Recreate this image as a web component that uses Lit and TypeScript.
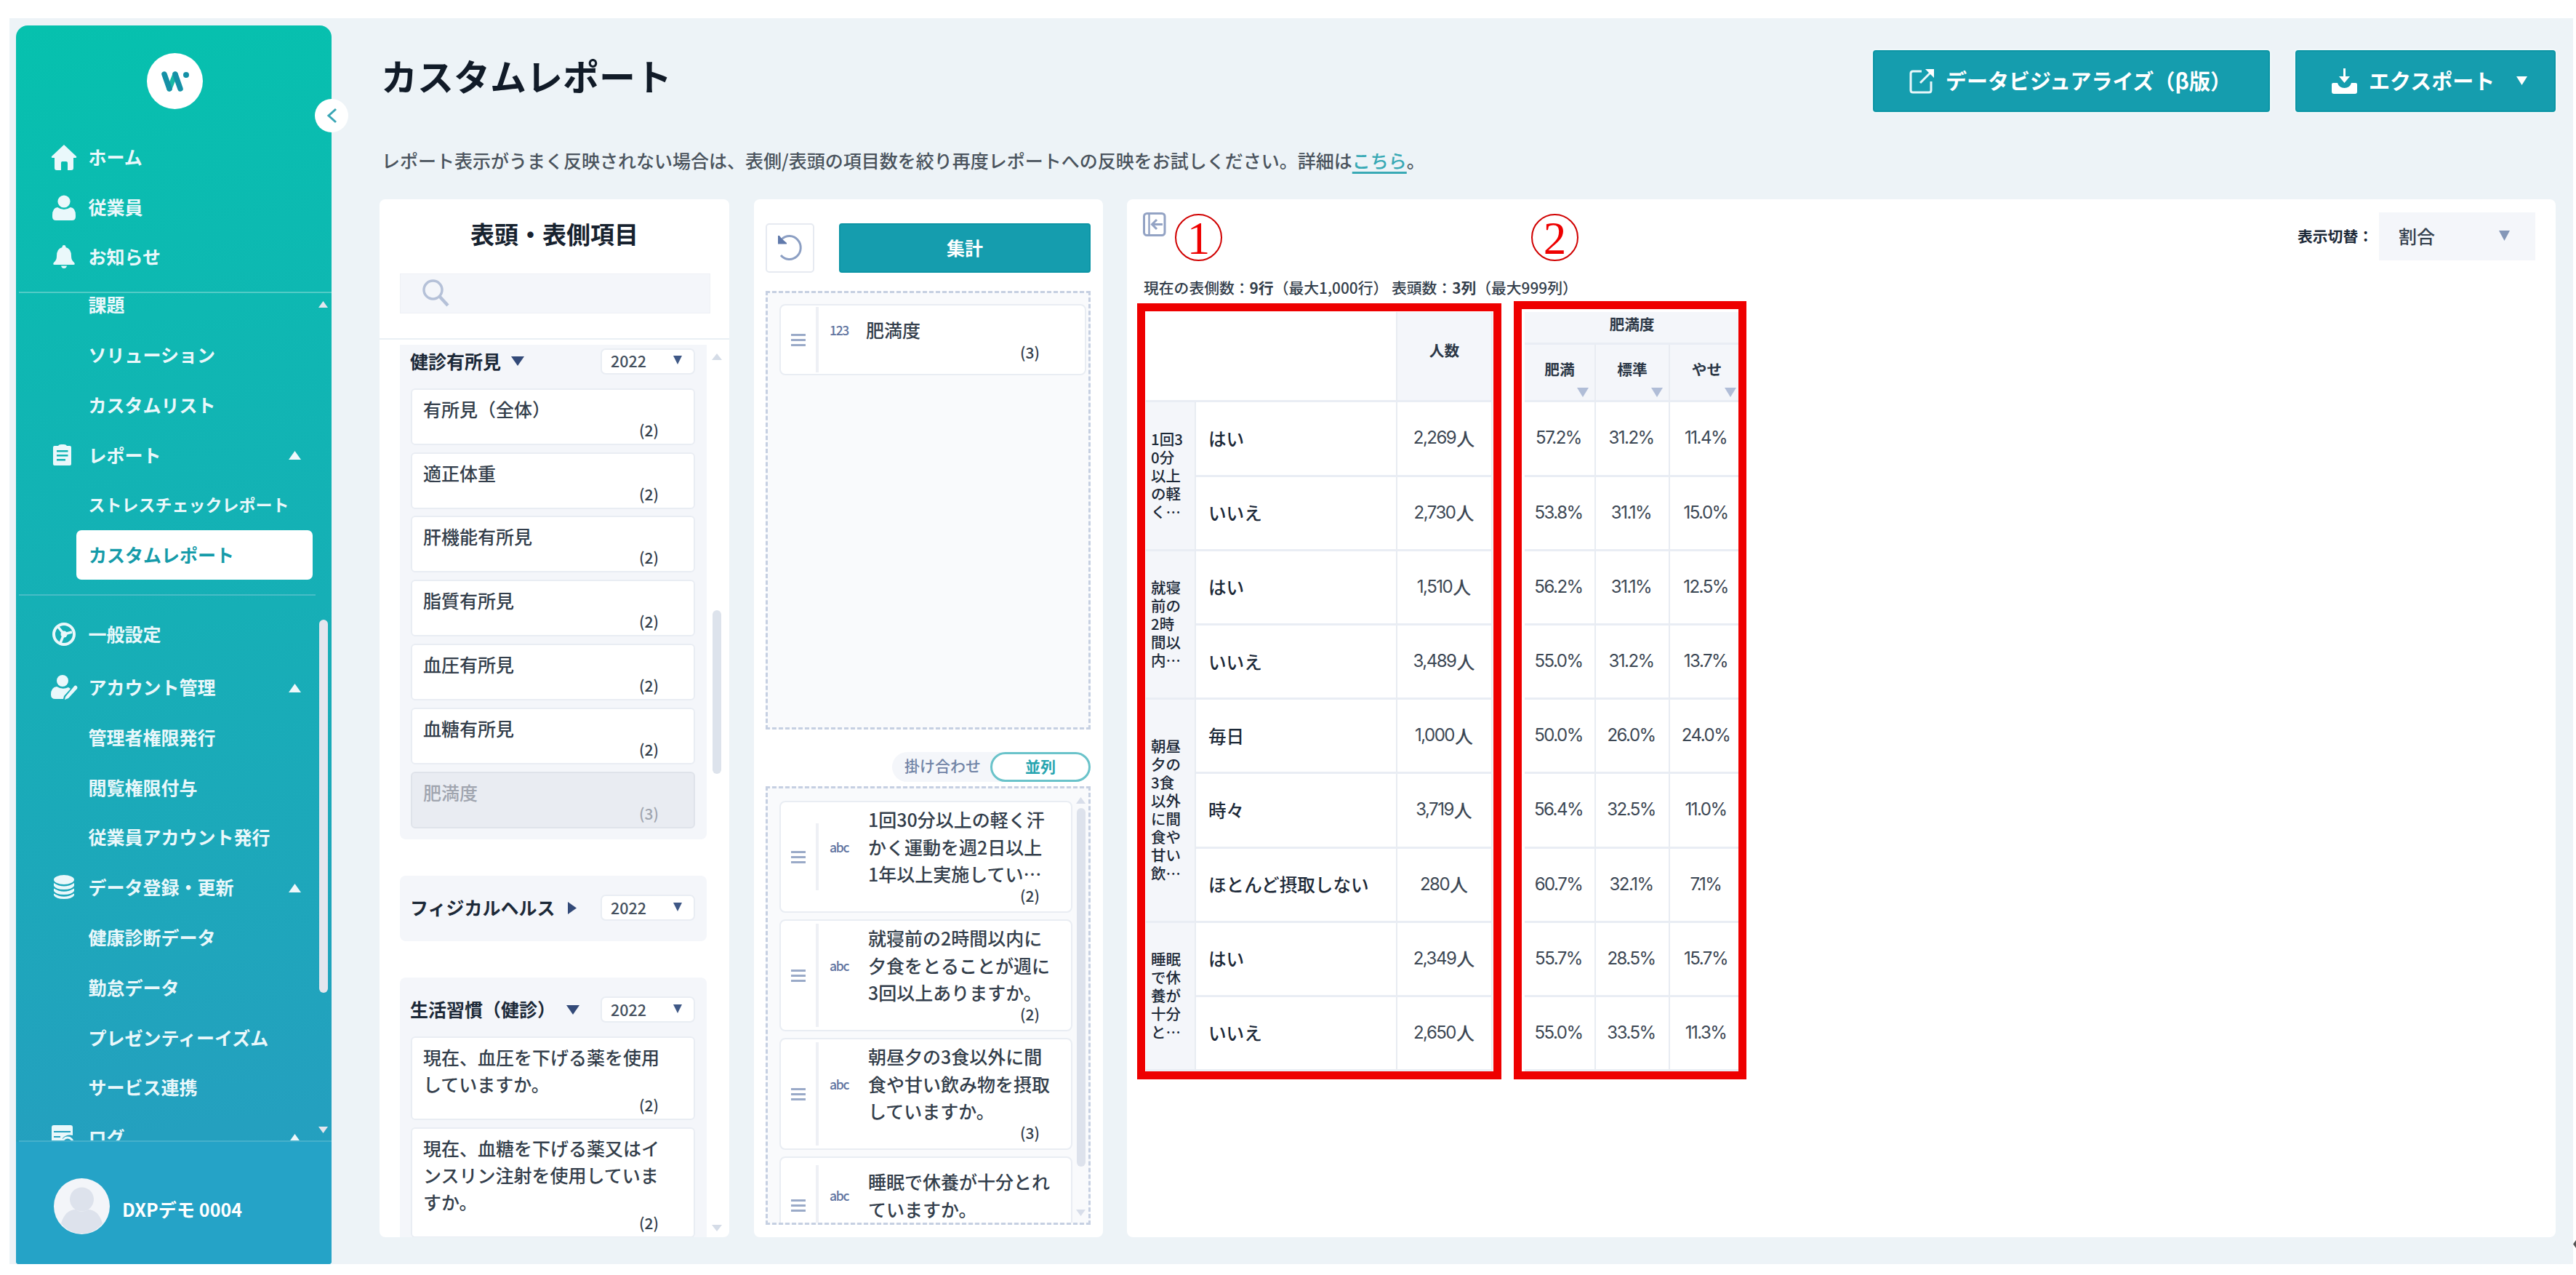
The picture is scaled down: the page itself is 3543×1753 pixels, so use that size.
import { LitElement, html, svg, css, nothing, TemplateResult } from "lit";
import { customElement, property } from "lit/decorators.js";
import { classMap } from "lit/directives/class-map.js";

const base = css`
  :host { display: block; box-sizing: border-box; font-family: "Noto Sans CJK JP", sans-serif; color: #1c2938; }
  *, *::before, *::after { box-sizing: border-box; }
  svg { display: block; flex: none; overflow: visible; }
`;

const tri = (dir: "up" | "down" | "right", w: number, h: number, color: string) => {
  const pts = { up: "0,10 10,10 5,0", down: "0,0 10,0 5,10", right: "0,0 10,5 0,10" }[dir];
  return html`<svg width=${w} height=${h} viewBox="0 0 10 10" preserveAspectRatio="none" fill=${color}><polygon points=${pts} /></svg>`;
};

const icons: Record<string, TemplateResult> = {
  home: svg`<path d="M17 0 L34 16 Q35 18 32 18 H30 V32 Q30 35 27 35 H22 V25 Q22 23 20 23 H14.500 Q13 23 13 25 V35 H7 Q4 35 4 32 V18 H2 Q-1 18 0 16 Z"/>`,
  user: svg`<circle cx="17" cy="9" r="8.600"/><path d="M8 17 Q17 23 26 17 Q33 18 33 28 V30 Q33 35 28 35 H6 Q1 35 1 30 V28 Q1 18 8 17Z"/>`,
  bell: svg`<path d="M17 1 Q19.500 1 19.500 4 Q27 6 27 16 Q27 22 31 25 Q33 28 30 28 H4 Q1 28 3 25 Q7 22 7 16 Q7 6 14.500 4 Q14.500 1 17 1Z"/><path d="M13 29.500 H21 Q20 33 17 33 T13 29.500Z"/>`,
  clip: svg`<path fill-rule="evenodd" d="M4 4 H9 Q10 2 13 2 H17 Q20 2 21 4 H25 Q27 4 27 6 V29 Q27 31 25 31 H4 Q2 31 2 29 V6 Q2 4 4 4Z M7 10 V12.500 H22.500 V10Z M7 16 V18.500 H22.500 V16Z M7 22 V24.500 H19 V22Z"/>`,
  gear: svg`<circle cx="17" cy="17" r="14" fill="none" stroke="currentColor" stroke-width="4"/><circle cx="17" cy="17" r="4.500"/><path d="M17 17 L28 14 M17 17 L9 7 M17 17 L12 29" stroke="currentColor" stroke-width="3.500"/>`,
  userEdit: svg`<circle cx="15" cy="8" r="8"/><path d="M7 16 Q15 21 23 17 L26 19 L17 29 L16 33 H5 Q-1 33 -1 27 Q-1 17 7 16Z"/><path d="M19 30 L31 15.500 Q33 13.500 35 16 Q36 17 35 19 L23 32 L18 34Z"/>`,
  db: svg`<ellipse cx="17" cy="6.500" rx="14" ry="6.500"/><path d="M3 11 Q17 20 31 11 V15 Q28 20 17 20 T3 15Z M3 18.500 Q17 27 31 18.500 V22 Q28 27 17 27 T3 22Z M3 25.500 Q17 34 31 25.500 V28 Q28 33 17 33 T3 28Z"/>`,
  log: svg`<path fill-rule="evenodd" d="M0 3 Q0 0 3 0 H26 Q29 0 29 3 V14 Q20 12 15 18 V22 H12 V28 H0Z M3 8 V10 H26 V8Z M3 15 V17 H12 V15Z"/><circle cx="22" cy="24" r="7" fill="none" stroke="currentColor" stroke-width="3"/>`,
};

interface NavItem { label: string; icon?: string; open?: boolean; active?: boolean; rule?: boolean; }

const TOP: NavItem[] = [
  { label: "ホーム", icon: "home" },
  { label: "従業員", icon: "user" },
  { label: "お知らせ", icon: "bell" },
];
const NAV: NavItem[] = [
  { label: "課題" },
  { label: "ソリューション" },
  { label: "カスタムリスト" },
  { label: "レポート", icon: "clip", open: true },
  { label: "ストレスチェックレポート" },
  { label: "カスタムレポート", active: true },
  { label: "一般設定", icon: "gear", rule: true },
  { label: "アカウント管理", icon: "userEdit", open: true },
  { label: "管理者権限発行" },
  { label: "閲覧権限付与" },
  { label: "従業員アカウント発行" },
  { label: "データ登録・更新", icon: "db", open: true },
  { label: "健康診断データ" },
  { label: "勤怠データ" },
  { label: "プレゼンティーイズム" },
  { label: "サービス連携" },
  { label: "ログ", icon: "log", open: true },
];

@customElement("side-nav")
class SideNav extends LitElement {
  static styles = [base, css`
    :host { position: relative; width: 434px; height: 1703px; flex: none; margin: 10px 0 0 9px; display: flex; flex-direction: column;
      border-radius: 16px 16px 4px 4px; color: #eaf8fb;
      background: linear-gradient(172deg, #06c1ae 0%, #16afb6 48%, #24a0bf 88%, #259fc0 100%); }
    .logo { width: 77px; height: 77px; border-radius: 50%; background: #fff; margin: 38px auto 32px 180px; display: flex; align-items: center; justify-content: center; }
    .row { display: flex; align-items: center; height: 68.8px; padding-left: 49px; font-size: 25px; font-weight: 700; line-height: 30px; white-space: nowrap; }
    .icon { width: 50.500px; flex: none; }
    .row .label { flex: 1; position: relative; top: -1.5px; }
    .long { font-size: 23px; }
    .caret { margin-right: 42px; }
    .scroll { position: relative; margin-top: 13px; height: 1169px; border-top: 2px solid #52cbc6; border-bottom: 2px solid #45b0cc; overflow: hidden; margin-inline: 4px 0; }
    .scroll .inner { margin: -18px 0 0 -4px; }
    .row.active { margin: 0 0 0 83px; width: 325px; padding-left: 17px; height: 68px; border-radius: 7px; background: #fff; color: #159ba9; }
    .rule { height: 2px; width: 408px; margin: 20px 0 19px 4px; background: #48bcc6; }
    .gap { height: 4px; }
    .bar { position: absolute; right: 5px; top: 449px; width: 12px; height: 513px; border-radius: 6px; background: #e4e6ee; }
    .up { position: absolute; right: 5px; top: 11px; }
    .down { position: absolute; right: 5px; bottom: 10px; }
    .user { flex: 1; display: flex; align-items: center; padding: 9px 0 0 52px; gap: 17px; background: #25a3c7; border-radius: 0 0 4px 4px; font-size: 25px; font-weight: 700; color: #fff; }
    .name { position: relative; top: 3px; white-space: nowrap; letter-spacing: 0.1px; }
    .collapse { position: absolute; left: 411px; top: 101px; width: 46px; height: 46px; border-radius: 50%; background: #fff; display: flex; align-items: center; justify-content: center; }
  `];
  private row(i: NavItem) {
    return html`
      ${i.rule ? html`<div class="rule"></div>` : nothing}
      <div class=${classMap({ row: true, active: !!i.active })}>
        ${i.active ? nothing : html`<span class="icon">${i.icon
          ? html`<svg width="35" height="35" viewBox="0 0 35 35" fill="currentColor">${icons[i.icon]}</svg>` : nothing}</span>`}
        <span class=${classMap({ label: true, long: i.label.length > 11 })}>${i.label}</span>
        ${i.open ? html`<span class="caret">${tri("up", 17, 12, "#eef8fb")}</span>` : nothing}
      </div>
      ${i.rule ? html`<div class="gap"></div>` : nothing}`;
  }
  render() {
    return html`
      <div class="logo">
        <svg width="40" height="30" viewBox="0 0 40 30" fill="none" stroke-linecap="round" stroke-linejoin="round">
          <path d="M12 25 L20 5" stroke="#18b9a5" stroke-width="7"/>
          <path d="M5 5 L12 25 M20 5 L27 25" stroke="#1490a6" stroke-width="7.500"/>
          <circle cx="35" cy="6" r="4" fill="#1490a6"/>
        </svg>
      </div>
      ${TOP.map((i) => this.row(i))}
      <div class="scroll">
        <div class="inner">${NAV.map((i) => this.row(i))}</div>
        <div class="up">${tri("up", 13, 9, "#e4e6ee")}</div>
        <div class="bar"></div>
        <div class="down">${tri("down", 13, 9, "#e4e6ee")}</div>
      </div>
      <div class="user">
        <svg width="77" height="77" viewBox="0 0 77 77">
          <circle cx="38.500" cy="38.500" r="38.500" fill="#f3f5f9"/>
          <path d="M10 62 Q16 43 30 43 Q38 49 47 43 Q61 43 67 62 Q56 76 38.500 76 T10 62Z" fill="#dde2ec"/>
          <circle cx="38.500" cy="29" r="16.500" fill="#dde2ec"/>
        </svg>
        <span class="name">DXPデモ 0004</span>
      </div>
      <div class="collapse">
        <svg width="13" height="20" viewBox="0 0 13 20" fill="none" stroke="#3aa6b5" stroke-width="3"><path d="M12 1 L2 10 L12 19"/></svg>
      </div>`;
  }
}

interface Item { lines: string[]; n: number; off?: boolean; }
interface Group { title: string; dir: "down" | "right"; gap: number; cls: string; items: Item[]; }

const GROUPS: Group[] = [
  { title: "健診有所見", dir: "down", gap: 13, cls: "first", items: [
    { lines: ["有所見（全体）"], n: 2 }, { lines: ["適正体重"], n: 2 }, { lines: ["肝機能有所見"], n: 2 },
    { lines: ["脂質有所見"], n: 2 }, { lines: ["血圧有所見"], n: 2 }, { lines: ["血糖有所見"], n: 2 },
    { lines: ["肥満度"], n: 3, off: true } ] },
  { title: "フィジカルヘルス", dir: "right", gap: 16, cls: "closed", items: [] },
  { title: "生活習慣（健診）", dir: "down", gap: 14, cls: "third", items: [
    { lines: ["現在、血圧を下げる薬を使用", "していますか。"], n: 2 },
    { lines: ["現在、血糖を下げる薬又はイ", "ンスリン注射を使用していま", "すか。"], n: 2 } ] },
];

@customElement("item-panel")
class ItemPanel extends LitElement {
  static styles = [base, css`
    :host { width: 481px; flex: none; height: 1427px; background: #fff; border-radius: 8px; display: flex; flex-direction: column; overflow: hidden; }
    h2 { margin: 0; height: 102px; line-height: 95px; text-align: center; font-size: 33px; font-weight: 700; color: #17222f; }
    .search { margin: 0 26px 34px 28px; height: 55px; background: #f4f6fa; border: 1px solid #eef0f5; padding: 7px 0 0 30px; }
    .list { position: relative; flex: 1; border-top: 2px solid #e9eff4; padding: 7px 31px 0 28px; min-height: 0; overflow: hidden; }
    .group { background: #f4f6fa; border-radius: 8px; padding: 26px 16px 16px 15px; margin-bottom: 50px; }
    .first { padding-top: 4px; border-radius: 0 0 8px 8px; padding-bottom: 15px; }
    .closed { padding-bottom: 27px; }
    .head { display: flex; align-items: center; height: 37px; font-size: 25px; font-weight: 700; white-space: nowrap; }
    .head .t { position: relative; top: -1px; left: -1px; }
    .arrow { flex: 1; padding-left: var(--g); }
    .year { width: 130px; height: 36px; background: #fff; border: 2px solid #e9edf3; border-radius: 7px; display: flex; align-items: center; justify-content: space-between; padding: 0 16px 3px 12px; font-size: 21.5px; font-weight: 500; line-height: 30px; color: #44505e; }
    .year span { position: relative; top: 1px; }
    .cards { margin-top: 18.500px; display: flex; flex-direction: column; gap: 9.8px; }
    .card { background: #fff; border: 2px solid #e9edf3; border-radius: 6px; padding: 8px 48px 8px 15px; font-size: 25px; line-height: 37px; white-space: nowrap; font-weight: 500; color: #333e4b; }
    .card .n { text-align: right; font-size: 21px; line-height: 21px; height: 21px; }
    .card.off { background: #e9ecf2; border-color: #dfe3ea; color: #a0a5af; }
    .up { position: absolute; left: 457px; top: 19px; }
    .bar { position: absolute; left: 458px; top: 372px; width: 12px; height: 225px; border-radius: 6px; background: #dde3ec; }
    .down { position: absolute; left: 457px; bottom: 8px; }
  `];
  render() {
    return html`
      <h2>表頭・表側項目</h2>
      <div class="search">
        <svg width="37" height="39" viewBox="0 0 37 39" fill="none" stroke="#b5c1d8"><circle cx="14.500" cy="14.500" r="12.500" stroke-width="3.500"/><path d="M24 24 L35 36" stroke-width="4.500"/></svg>
      </div>
      <div class="list">
        ${GROUPS.map((g) => html`
          <div class="group ${g.cls}">
            <div class="head"><span class="t">${g.title}</span>
              <span class="arrow" style="--g:${g.gap}px">${g.dir === "down" ? tri("down", 18, 13, "#334a78") : tri("right", 12, 17, "#334a78")}</span>
              <div class="year"><span>2022</span>${tri("down", 12, 12, "#3f5886")}</div>
            </div>
            ${g.items.length ? html`<div class="cards">${g.items.map((i) => html`
              <div class=${classMap({ card: true, off: !!i.off })}>
                ${i.lines.map((l) => html`<div>${l}</div>`)}<div class="n">(${i.n})</div>
              </div>`)}</div>` : nothing}
          </div>`)}
        <div class="up">${tri("up", 14, 9, "#d5dce7")}</div>
        <div class="bar"></div>
        <div class="down">${tri("down", 14, 9, "#d5dce7")}</div>
      </div>`;
  }
}

interface Drop { type: string; lines: string[]; n: number; cls: string; }
const AXIS: Drop[] = [
  { type: "abc", lines: ["1回30分以上の軽く汗", "かく運動を週2日以上", "1年以上実施してい…"], n: 2, cls: "shortline" },
  { type: "abc", lines: ["就寝前の2時間以内に", "夕食をとることが週に", "3回以上ありますか。"], n: 2, cls: "" },
  { type: "abc", lines: ["朝昼夕の3食以外に間", "食や甘い飲み物を摂取", "していますか。"], n: 3, cls: "" },
  { type: "abc", lines: ["睡眠で休養が十分とれ", "ていますか。"], n: 2, cls: "two" },
];

@customElement("axis-panel")
class AxisPanel extends LitElement {
  static styles = [base, css`
    :host { width: 480px; flex: none; height: 1427px; margin-left: 34px; background: #fff; border-radius: 8px; padding: 33px 17px 0 16px; display: flex; flex-direction: column; }
    .actions { display: flex; justify-content: space-between; height: 68px; margin-bottom: 25px; }
    .undo { width: 67px; border: 2px solid #e6eaf1; border-radius: 5px; display: flex; align-items: center; justify-content: center; }
    .run { width: 346px; background: #159dae; border: 2px solid #0c95a5; border-radius: 4px; color: #fff; font-size: 25px; font-weight: 700; display: flex; align-items: center; justify-content: center; line-height: 60px; padding-bottom: 2px; }
    .zone { position: relative; height: 603px; border: 3px dashed #c6d0e2; background: #f9fafc; overflow: hidden; padding: 15px 16px 0; display: flex; flex-direction: column; gap: 9px; flex: none; }
    .zone.one { padding-right: 3px; }
    .zone.many { padding: 17px 22px 0 16px; }
    .card { display: flex; align-items: center; flex: none; height: 154px; background: #fff; border: 2px solid #e9edf3; border-radius: 8px; }
    .grip { width: 48px; flex: none; padding-left: 14px; display: flex; flex-direction: column; gap: 4.500px; }
    .grip i { width: 20px; height: 2.5px; background: #9aaac8; }
    .vline { align-self: stretch; flex: none; width: 4px; margin: 4px 0; background: #eef0f5; }
    .shortline .vline { margin: 29px 0; }
    .two .vline { margin-top: 10px; }
    .type { width: 68px; flex: none; padding-left: 15px; margin-top: -26px; font-size: 17.500px; font-weight: 500; letter-spacing: -1.3px; color: #61749f; line-height: 20px; }
    .body { align-self: stretch; flex: 1; min-width: 0; padding: 5px 43px 0 0; font-size: 25px; line-height: 37.300px; white-space: nowrap; font-weight: 500; color: #333e4b; }
    .n { text-align: right; font-size: 21px; line-height: 22px; }
    .single { height: 98px; }
    .single .body { padding: 15px 62px 0 0; }
    .single .type { width: 65px; }
    .single .vline { margin: 2px 0; }
    .two { height: 134px; }
    .two .body { padding-top: 14px; }
    .toggle { margin: 31px 0 6px auto; width: 273px; height: 41px; display: flex; border-radius: 21px; background: #f4f6fa; font-size: 21px; flex: none; }
    .toggle div { line-height: 36px; }
    .l { width: 135px; padding-left: 17px; color: #7184a6; font-weight: 500; }
    .r { width: 138px; border: 3px solid #6ac3ca; border-radius: 21px; background: #fff; text-align: center; font-weight: 700; color: #27a5b0; }
    .toggle .r { line-height: 32px; }
    .up { position: absolute; right: 4px; top: 12px; }
    .bar { position: absolute; right: 4px; top: 27px; width: 12px; height: 493px; border-radius: 6px; background: #dde2ec; }
    .down { position: absolute; right: 4px; bottom: 9px; }
  `];
  private card(d: Drop) {
    return html`<div class="card ${d.cls}">
      <div class="grip"><i></i><i></i><i></i></div><div class="vline"></div><div class="type">${d.type}</div>
      <div class="body">${d.lines.map((l) => html`<div>${l}</div>`)}<div class="n">(${d.n})</div></div></div>`;
  }
  render() {
    return html`
      <div class="actions">
        <div class="undo"><svg width="36" height="38" viewBox="0 0 36 38" fill="none"><path d="M6 7 A15.500 16 0 1 1 5 29" stroke="#8c9fc3" stroke-width="3"/><path d="M1 2 L3 2 L6 6 L13 12 V13.500 H1Z" fill="#6079ab"/></svg></div>
        <div class="run">集計</div>
      </div>
      <div class="zone one">${this.card({ type: "123", lines: ["肥満度"], n: 3, cls: "single" })}</div>
      <div class="toggle"><div class="l">掛け合わせ</div><div class="r">並列</div></div>
      <div class="zone many">
        ${AXIS.map((d) => this.card(d))}
        <div class="up">${tri("up", 13, 9, "#d8deea")}</div>
        <div class="bar"></div>
        <div class="down">${tri("down", 13, 9, "#d8deea")}</div>
      </div>`;
  }
}

const SIDE = [
  { lines: ["1回3", "0分", "以上", "の軽", "く…"], rows: [["はい", "2,269", "57.2", "31.2", "11.4"], ["いいえ", "2,730", "53.8", "31.1", "15.0"]] },
  { lines: ["就寝", "前の", "2時", "間以", "内…"], rows: [["はい", "1,510", "56.2", "31.1", "12.5"], ["いいえ", "3,489", "55.0", "31.2", "13.7"]] },
  { lines: ["朝昼", "夕の", "3食", "以外", "に間", "食や", "甘い", "飲…"], rows: [["毎日", "1,000", "50.0", "26.0", "24.0"], ["時々", "3,719", "56.4", "32.5", "11.0"], ["ほとんど摂取しない", "280", "60.7", "32.1", "7.1"]] },
  { lines: ["睡眠", "で休", "養が", "十分", "と…"], rows: [["はい", "2,349", "55.7", "28.5", "15.7"], ["いいえ", "2,650", "55.0", "33.5", "11.3"]] },
];

@customElement("report-panel")
class ReportPanel extends LitElement {
  @property() unit = "割合";
  static styles = [base, css`
    :host { position: relative; flex: 1; height: 1427px; margin-left: 33px; background: #fff; border-radius: 8px; }
    .bar { display: flex; justify-content: space-between; align-items: flex-start; height: 106px; padding: 18px 28px 0 22px; }
    .switch { display: flex; align-items: center; font-size: 20.8px; font-weight: 700; }
    .label { white-space: nowrap; width: 112px; line-height: 30px; position: relative; top: -1px; }
    .select { width: 215px; height: 66px; background: #f4f6fa; display: flex; align-items: center; justify-content: space-between; padding: 0 35px 3px 27px; font-size: 25px; font-weight: 500; color: #36424f; }
    .meta { padding-left: 23px; height: 49px; line-height: 30px; font-size: 20.8px; white-space: pre; font-weight: 500; color: #333e4b; }
    .tables { display: flex; gap: 44px; padding-left: 26px; }
    .side { display: grid; grid-template-columns: 69px 277px 131px; grid-template-rows: 124px; grid-auto-rows: 102.200px; }
    .cols { display: grid; grid-template-columns: 98px 102px 103px; grid-template-rows: 45px 79px; grid-auto-rows: 102.200px; }
    .side > div, .cols > div { border-right: 2px solid #e8ecf2; border-bottom: 3px solid #e9edf4; display: flex; align-items: center; }
    .blank { grid-column: span 2; }
    .side > .num, .cols > .num { justify-content: center; color: #3c4754; padding: 0 1px 2px 0; }
    .cols > .num { padding-right: 3px; }
    .hd { background: #f4f6fa; font-size: 20.7px; font-weight: 700; justify-content: center; position: relative; color: #2b3746; }
    .hd .t { padding-bottom: 10px; }
    .hd.people .t { padding-bottom: 17px; }
    .wide { grid-column: span 3; }
    .hd.wide .t { padding: 0 6px 11px 0; }
    .sort { position: absolute; right: 8px; bottom: 4px; }
    .cols .hd:nth-child(4) .sort { right: 10px; }
    .cat { background: #f4f6fa; font-size: 20.5px; line-height: 25px; padding: 0 0 2px 7px; white-space: nowrap; font-weight: 500; }
    .opt { padding-left: 17px; font-size: 24.6px; line-height: 30px; padding-bottom: 2px; white-space: nowrap; font-weight: 500; }
    .f { font-family: Inter, sans-serif; font-size: 24px; letter-spacing: -1.5px; }
    .k { font-size: 25px; font-weight: 500; margin-left: 1px; }
    .box { position: absolute; border: 11.500px solid #ee0000; }
    .b1 { left: 14px; top: 143px; width: 501px; height: 1067px; }
    .b2 { left: 532px; top: 140px; width: 320px; height: 1070px; }
    .mark { position: absolute; top: 20px; width: 65px; height: 65px; border: 2px solid #d00000; border-radius: 50%; display: flex; align-items: center; justify-content: center; font-family: "Liberation Serif", serif; font-size: 63px; line-height: 60px; padding-top: 2px; color: #ee0000; }
    .m1 { left: 66px; }
    .m2 { left: 556px; }
  `];
  render() {
    const opt = (r: string[]) => html`<div class="opt">${r[0]}</div><div class="num"><span class="f">${r[1]}</span><span class="k">人</span></div>`;
    return html`
      <div class="bar">
        <svg width="32" height="34" viewBox="0 0 32 34" fill="none" stroke="#93a3c4"><rect x="1.500" y="1.500" width="28.500" height="30" rx="4" stroke-width="3"/><path d="M8.500 2 V31" stroke-width="2.500"/><path d="M27 16.500 H14 M19 10 L12.500 16.500 L19 23" stroke-width="3"/></svg>
        <div class="switch"><span class="label">表示切替：</span><div class="select"><span>${this.unit}</span>${tri("down", 15, 14, "#8497b8")}</div></div>
      </div>
      <div class="meta">現在の表側数：<b>9行</b>（最大1,000行） 表頭数：<b>3列</b>（最大999列）</div>
      <div class="tables">
        <div class="side">
          <div class="blank"></div><div class="hd people"><span class="t">人数</span></div>
          ${SIDE.map((s) => html`<div class="cat" style="grid-row: span ${s.rows.length}"><div>${s.lines.map((l) => html`<div>${l}</div>`)}</div></div>
            ${s.rows.map(opt)}`)}
        </div>
        <div class="cols">
          <div class="hd wide"><span class="t">肥満度</span></div>
          ${["肥満", "標準", "やせ"].map((h) => html`<div class="hd"><span class="t">${h}</span><span class="sort">${tri("down", 16, 13, "#b0bdd7")}</span></div>`)}
          ${SIDE.map((s) => s.rows.map((r) => r.slice(2).map((v) => html`<div class="num"><span class="f">${v}%</span></div>`)))}
        </div>
      </div>
      <div class="box b1"></div><div class="box b2"></div>
      <div class="mark m1">1</div><div class="mark m2">2</div>`;
  }
}

@customElement("app-root")
class AppRoot extends LitElement {
  static styles = [base, css`
    :host { width: 3543px; height: 1753px; padding: 25px 4px 15px 13px; background: #fff; overflow: hidden; position: relative; }
    .frame { display: flex; height: 1713px; background: #edf3f7; }
    .main { width: 2993px; margin-left: 66px; }
    .head { display: flex; align-items: flex-start; height: 179px; padding-top: 44px; }
    h1 { margin: 0; flex: 1; padding-left: 2px; font-size: 50px; line-height: 68px; font-weight: 700; color: #111b28; }
    .btn { height: 85px; background: #159dae; border: 2px solid #0b95a5; border-radius: 4px; box-shadow: 0 0 0 2px #f1f8fa; color: #fff; font-size: 29px; font-weight: 700; display: flex; align-items: center; padding-bottom: 1px; white-space: nowrap; }
    .btn .t { position: relative; top: -1px; }
    .viz { width: 546px; margin-right: 35px; padding-left: 48px; gap: 15px; }
    .exp { width: 358px; padding-left: 48px; gap: 16px; }
    .tri { margin: -1px 0 0 14px; }
    .note { height: 70.400px; padding-left: 3px; line-height: 32px; font-size: 25px; white-space: nowrap; font-weight: 500; color: #4a535d; }
    .note a { color: #38a9b5; text-decoration: underline; text-decoration-thickness: 3px; text-underline-offset: 5px; }
    .panels { display: flex; }
    .cursor { position: absolute; right: 0; top: 1705px; }
  `];
  render() {
    return html`
      <div class="frame">
        <side-nav></side-nav>
        <div class="main">
          <div class="head">
            <h1>カスタムレポート</h1>
            <div class="btn viz">
              <svg width="35" height="35" viewBox="0 0 35 35" fill="none" stroke="#e8f7fa" stroke-width="3"><path d="M17 4 H5 Q2 4 2 7 V30 Q2 33 5 33 H27 Q30 33 30 30 V18"/><path d="M15 20 L31 4"/><path d="M22 1 H34 V13Z" fill="#fff" stroke="none"/></svg>
              <span class="t">データビジュアライズ（β版）</span>
            </div>
            <div class="btn exp">
              <svg width="35" height="35" viewBox="0 0 35 35" fill="#fff"><path d="M16 0 H19 V11 H25 L17.500 20 L10 11 H16Z"/><path d="M0 22 Q0 20 2 20 H8 Q10 27 17.500 27 T27 20 H33 Q35 20 35 22 V32 Q35 35 32 35 H3 Q0 35 0 32Z"/></svg>
              <span class="t">エクスポート</span>
              <span class="tri">${tri("down", 15, 12, "#fff")}</span>
            </div>
          </div>
          <div class="note">レポート表示がうまく反映されない場合は、表側/表頭の項目数を絞り再度レポートへの反映をお試しください。詳細は<a>こちら</a>。</div>
          <div class="panels"><item-panel></item-panel><axis-panel></axis-panel><report-panel></report-panel></div>
        </div>
      </div>
      <svg class="cursor" width="4" height="11" viewBox="0 0 4 11" fill="#555"><path d="M4 0 L0 5.500 L4 11Z"/></svg>`;
  }
}
